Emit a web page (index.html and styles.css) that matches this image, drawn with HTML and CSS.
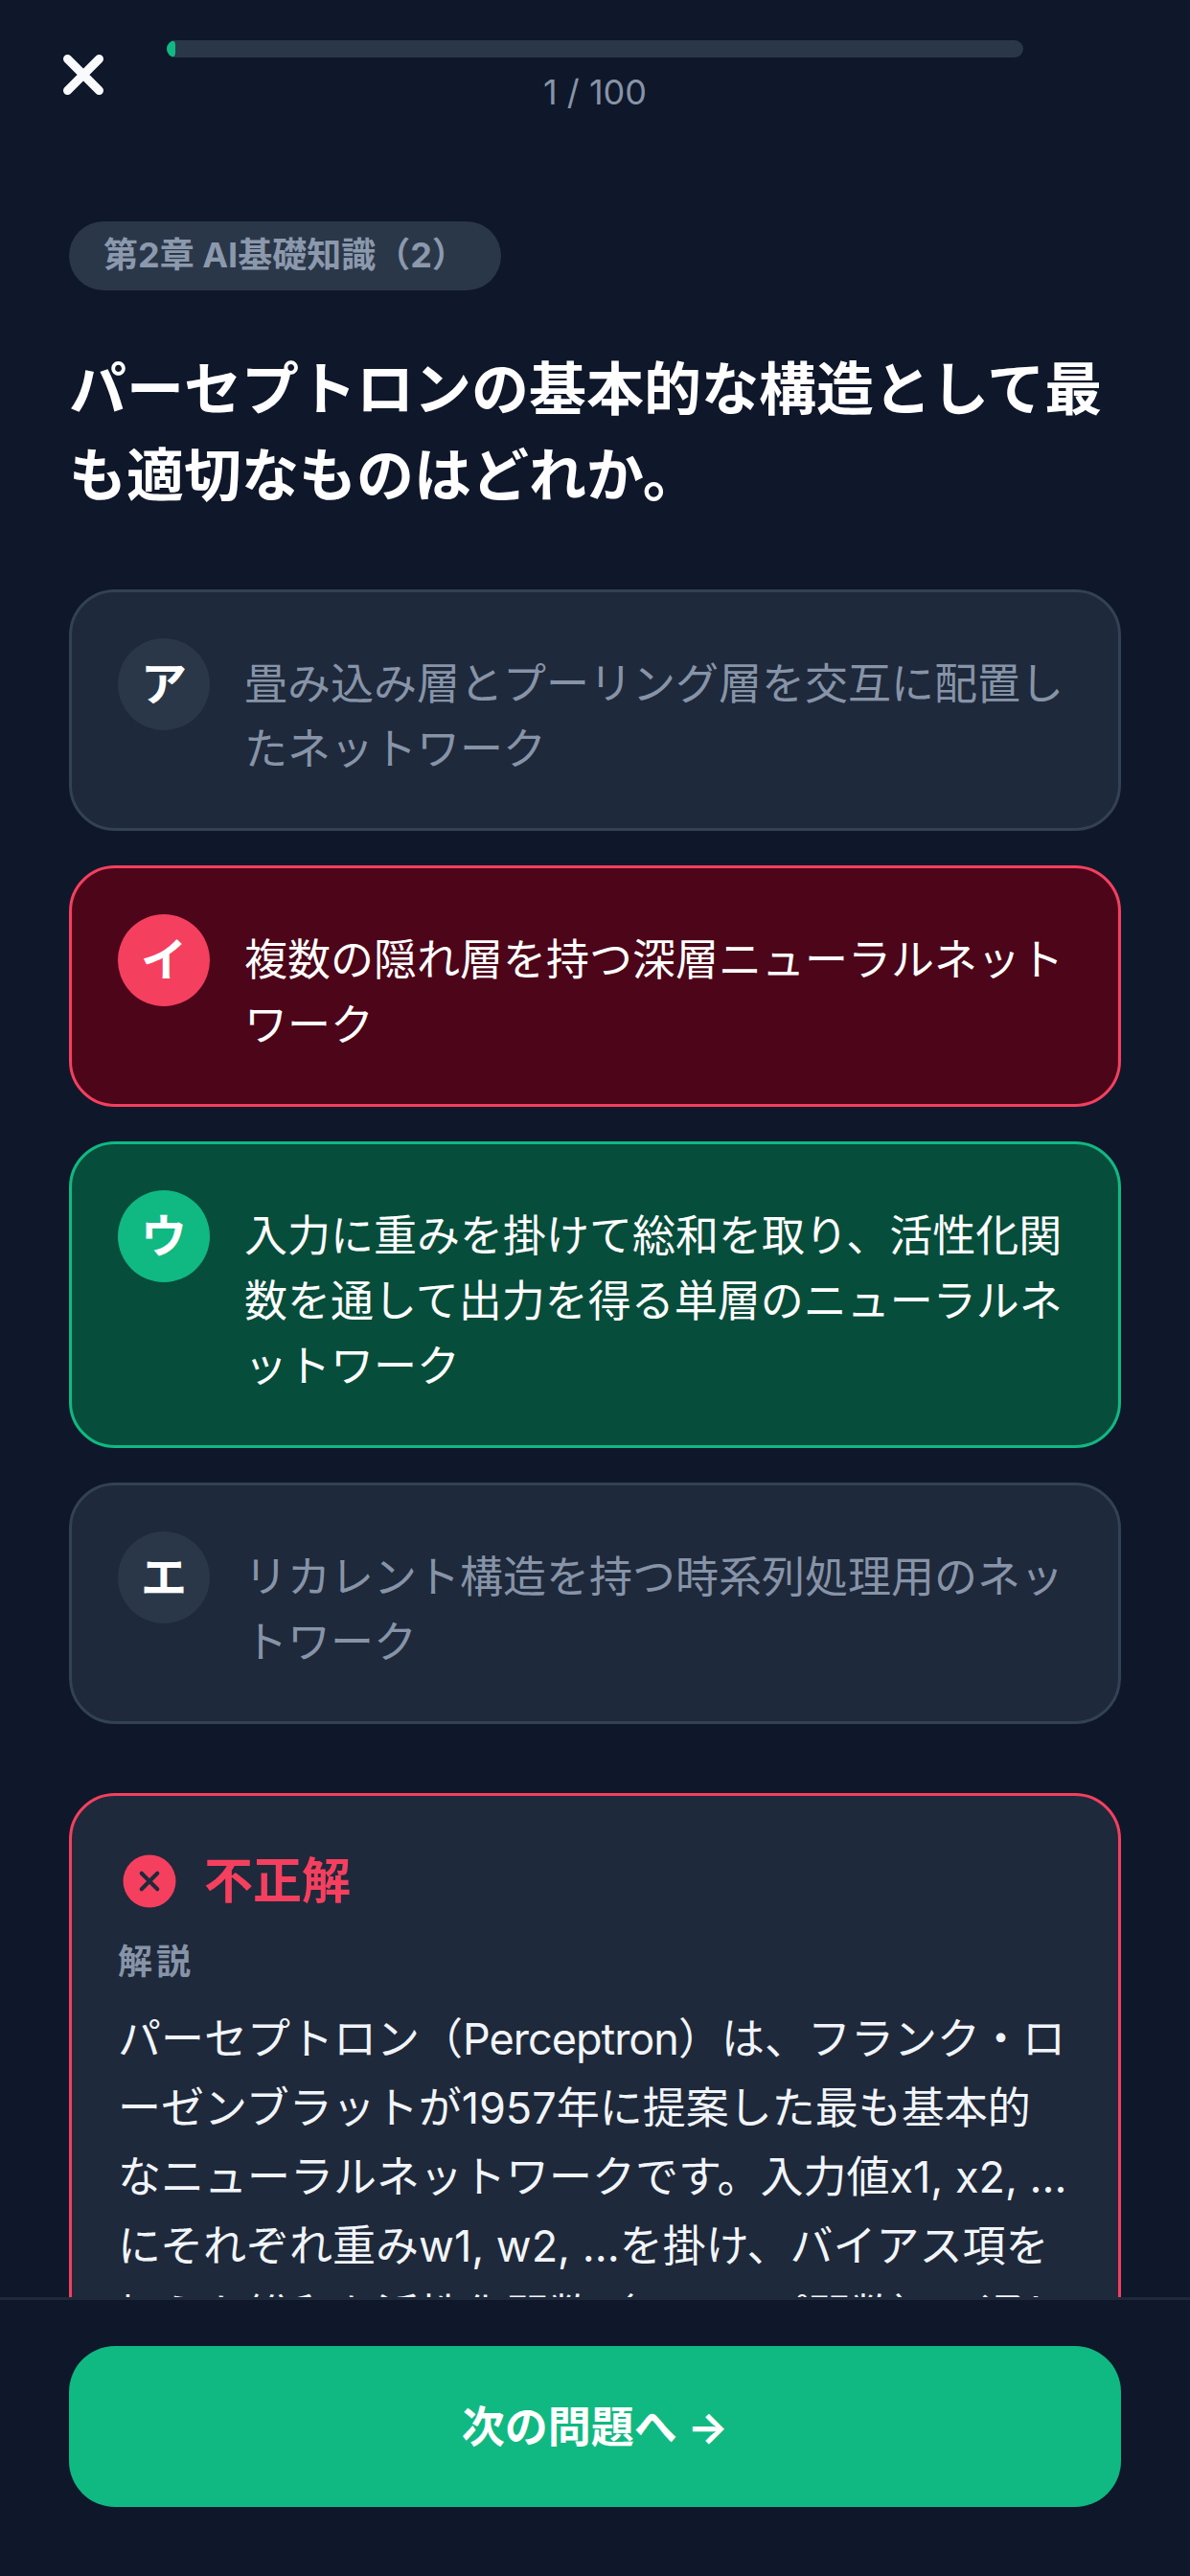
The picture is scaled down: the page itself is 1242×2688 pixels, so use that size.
FILE: index.html
```html
<!DOCTYPE html>
<html lang="ja">
<head>
    <meta charset="UTF-8">
    <meta name="viewport" content="width=device-width, initial-scale=1.0">
    <title>クイズ</title>
    <link rel="stylesheet" href="styles.css">
</head>
<body>
    <div class="screen">
        <div class="scroll">
            <header class="topbar">
                <button class="close" type="button" aria-label="閉じる">
                    <svg viewBox="0 0 48 48" width="48" height="48"><path d="M7.5 7.5 40.5 40.5M40.5 7.5 7.5 40.5"/></svg>
                </button>
                <div class="progress">
                    <div class="track"><div class="fill" style="width: 1%"></div></div>
                    <div class="count">1 / 100</div>
                </div>
            </header>

            <main class="content">
                <span class="chip">第2章 AI基礎知識（2）</span>
                <h1 class="question">パーセプトロンの基本的な構造として最も適切なものはどれか。</h1>

                <div class="options">
                    <div class="option">
                        <div class="badge">ア</div>
                        <div class="option-text">畳み込み層とプーリング層を交互に配置したネットワーク</div>
                    </div>
                    <div class="option wrong">
                        <div class="badge">イ</div>
                        <div class="option-text">複数の隠れ層を持つ深層ニューラルネットワーク</div>
                    </div>
                    <div class="option correct">
                        <div class="badge">ウ</div>
                        <div class="option-text">入力に重みを掛けて総和を取り、活性化関数を通して出力を得る単層のニューラルネットワーク</div>
                    </div>
                    <div class="option">
                        <div class="badge">エ</div>
                        <div class="option-text">リカレント構造を持つ時系列処理用のネットワーク</div>
                    </div>
                </div>

                <section class="result">
                    <div class="result-head">
                        <svg class="result-icon" viewBox="0 0 24 24" width="66" height="66"><circle cx="12" cy="12" r="10"/><path d="m15 9-6 6M9 9l6 6"/></svg>
                        <span class="result-title">不正解</span>
                    </div>
                    <div class="result-label">解説</div>
                    <p class="result-body">パーセプトロン（<span class="latin">Perceptron</span>）は、フランク・ロ<br>ーゼンブラットが1957年に提案した最も基本的<br>なニューラルネットワークです。入力値x1, x2, ...<br>にそれぞれ重みw1, w2, ...を掛け、バイアス項を<br>加えた総和を活性化関数（ステップ関数）に通して<br>出力を得ます。</p>
                </section>
            </main>
        </div>

        <footer class="footer">
            <button class="next" type="button">次の問題へ →</button>
        </footer>
    </div>
</body>
</html>
```

FILE: styles.css
```css
* {
    box-sizing: border-box;
}
html, body {
    margin: 0;
    height: 100%;
}
body {
    background: #0f172a;
    color: #f8fafc;
    font-family: "Inter", "Noto Sans CJK JP", sans-serif;
}
.screen {
    height: 2688px;
    display: flex;
    flex-direction: column;
    overflow: hidden;
}
.scroll {
    flex: 1;
    min-height: 0;
    overflow: hidden;
}
.topbar {
    display: flex;
    align-items: flex-start;
    height: 111px;
    padding: 42px 174px 0 63px;
}
.close {
    flex: none;
    width: 48px;
    height: 48px;
    margin: 12px 63px 0 0;
    padding: 0;
    border: none;
    background: none;
}
.close svg {
    display: block;
    fill: none;
    stroke: #f8fafc;
    stroke-width: 9;
    stroke-linecap: round;
}
.progress {
    flex: 1;
    text-align: center;
}
.track {
    height: 18px;
    border-radius: 9px;
    background: #2a3749;
    overflow: hidden;
}
.fill {
    height: 100%;
    border-radius: 9px;
    background: #10b981;
}
.count {
    margin-top: 12px;
    color: #8794a8;
    font-size: 36px;
    line-height: 48px;
}
.content {
    padding: 120px 72px 0;
}
.chip {
    display: block;
    width: fit-content;
    height: 72px;
    padding: 0 36px;
    border-radius: 36px;
    background: #2a3749;
    color: #8c99ad;
    font-size: 36px;
    font-weight: 700;
    line-height: 70px;
}
.question {
    margin: 58px 0 74px;
    font-size: 60px;
    font-weight: 700;
    line-height: 90px;
    color: #ffffff;
}
.options {
    display: flex;
    flex-direction: column;
    gap: 36px;
}
.option {
    display: flex;
    gap: 36px;
    padding: 48px;
    border: 3px solid #334155;
    border-radius: 48px;
    background: #1e293b;
    color: #8794a8;
}
.option.wrong {
    border-color: #f43f5e;
    background: #4c0519;
    color: #ffffff;
}
.option.correct {
    border-color: #10b981;
    background: #064e3b;
    color: #ffffff;
}
.badge {
    flex: none;
    width: 96px;
    height: 96px;
    border-radius: 50%;
    background: #2a3749;
    color: #ffffff;
    font-size: 48px;
    font-weight: 700;
    line-height: 96px;
    text-align: center;
}
.wrong .badge {
    background: #f43f5e;
}
.correct .badge {
    background: #10b981;
}
.option-text {
    padding-top: 14px;
    font-size: 45px;
    line-height: 68px;
}
.result {
    margin-top: 72px;
    padding: 48px;
    border: 3px solid #f43f5e;
    border-radius: 48px;
    background: #1e293b;
}
.result-head {
    display: flex;
    align-items: center;
    gap: 24px;
}
.result-icon {
    flex: none;
}
.result-icon circle {
    fill: #f43f5e;
}
.result-icon path {
    fill: none;
    stroke: #1e293b;
    stroke-width: 1.5;
    stroke-linecap: round;
}
.result-title {
    color: #f43f5e;
    font-size: 51px;
    font-weight: 700;
    line-height: 81px;
}
.result-label {
    margin-top: 15px;
    color: #8794a8;
    font-size: 36px;
    font-weight: 700;
    line-height: 58px;
    letter-spacing: 4px;
}
.result-body {
    margin: 16px 0 0;
    color: #f1f5f9;
    font-size: 45px;
    line-height: 72px;
    white-space: nowrap;
}
.latin {
    letter-spacing: -1px;
}
.footer {
    flex: none;
    padding: 48px 72px 72px;
    border-top: 3px solid #1e293b;
    background: #0f172a;
}
.next {
    display: block;
    width: 100%;
    height: 168px;
    padding: 0 0 6px;
    border: none;
    border-radius: 48px;
    background: #10b981;
    color: #ffffff;
    font-family: inherit;
    font-size: 45px;
    font-weight: 700;
}
```
